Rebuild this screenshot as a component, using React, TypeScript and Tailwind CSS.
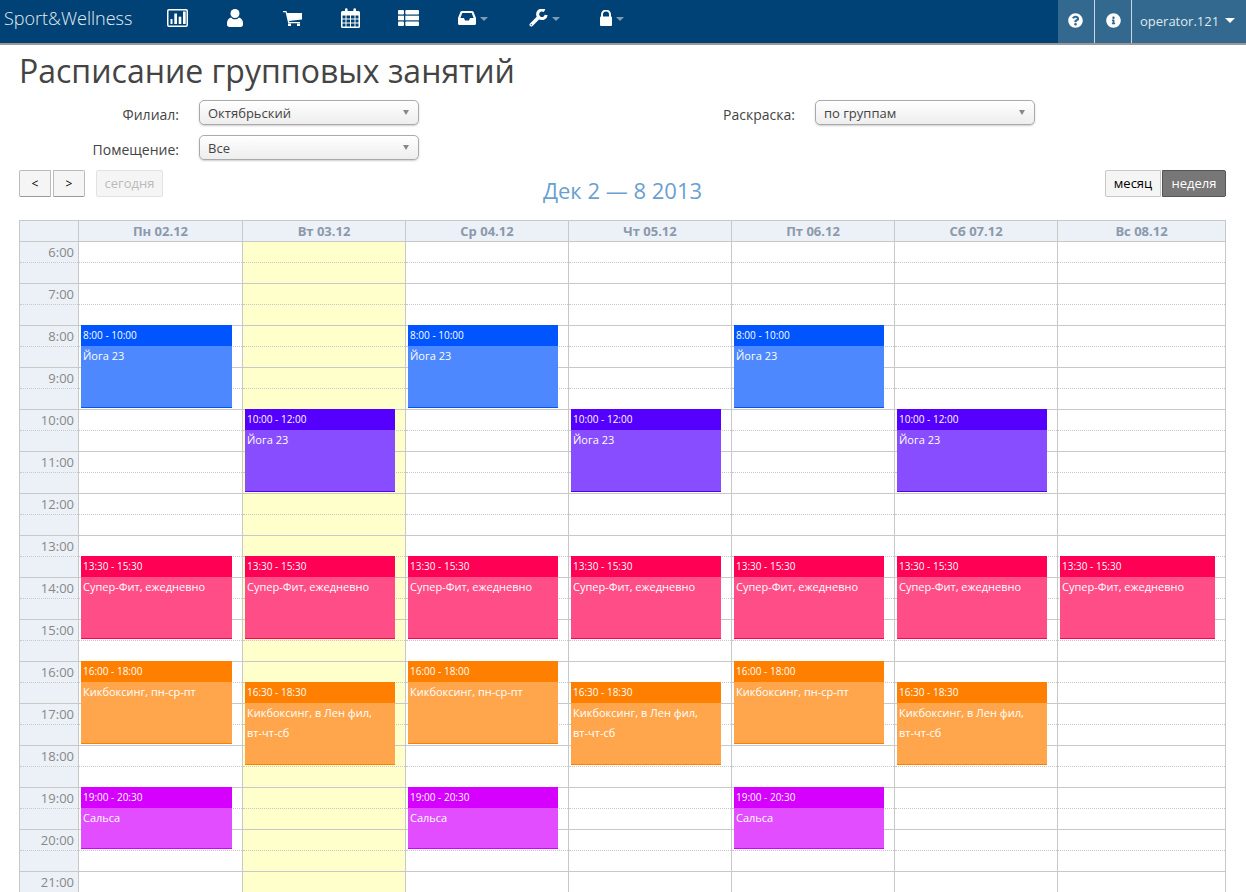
import { FaInfoCircle, FaQuestionCircle } from 'react-icons/fa'

type CalEvent = { day: number; start: number; end: number; time: string; title: string[]; kind: keyof typeof palette }

const palette = {
  blue: { head: 'bg-[#0055ff]', body: 'bg-[#4d88ff]', edge: 'border-[#0055ff]' },
  violet: { head: 'bg-[#5500ff]', body: 'bg-[#884dff]', edge: 'border-[#5500ff]' },
  pink: { head: 'bg-[#ff0055]', body: 'bg-[#ff4d88]', edge: 'border-[#ff0055]' },
  orange: { head: 'bg-[#ff8000]', body: 'bg-[#ffa64d]', edge: 'border-[#ff8000]' },
  magenta: { head: 'bg-[#d500ff]', body: 'bg-[#e24dff]', edge: 'border-[#d500ff]' },
}

const days = ['Пн 02.12', 'Вт 03.12', 'Ср 04.12', 'Чт 05.12', 'Пт 06.12', 'Сб 07.12', 'Вс 08.12']
const hours = Array.from({ length: 16 }, (_, i) => `${i + 6}:00`)

// monday is a pixel wider, sunday takes what is left
const colWidth = (i: number) => (i === 0 ? 'w-[164px]' : i === 6 ? 'w-[169px] border-r' : 'w-[163px]')
const eventWidth = (i: number) => (i === 0 ? 'w-[151px]' : i === 6 ? 'w-[155px]' : 'w-[150px]')

const yoga = ['Йога 23']
const fit = ['Супер-Фит, ежедневно']
const kick1 = ['Кикбоксинг, пн-ср-пт']
const kick2 = ['Кикбоксинг, в Лен фил,', 'вт-чт-сб']

const events: CalEvent[] = [
  ...[0, 2, 4].map((day) => ({ day, start: 8, end: 10, time: '8:00 - 10:00', title: yoga, kind: 'blue' as const })),
  ...[1, 3, 5].map((day) => ({ day, start: 10, end: 12, time: '10:00 - 12:00', title: yoga, kind: 'violet' as const })),
  ...[0, 1, 2, 3, 4, 5, 6].map((day) => ({ day, start: 13.5, end: 15.5, time: '13:30 - 15:30', title: fit, kind: 'pink' as const })),
  ...[0, 2, 4].map((day) => ({ day, start: 16, end: 18, time: '16:00 - 18:00', title: kick1, kind: 'orange' as const })),
  ...[1, 3, 5].map((day) => ({ day, start: 16.5, end: 18.5, time: '16:30 - 18:30', title: kick2, kind: 'orange' as const })),
  ...[0, 2, 4].map((day) => ({ day, start: 19, end: 20.5, time: '19:00 - 20:30', title: ['Сальса'], kind: 'magenta' as const })),
]

function ChartBox() {
  return (
    <svg width="21" height="18" viewBox="0 0 21 18" fill="white">
      <path fillRule="evenodd" d="M2 0h17a2 2 0 0 1 2 2v14a2 2 0 0 1-2 2H2a2 2 0 0 1-2-2V2a2 2 0 0 1 2-2zm0 1.500a.5.5 0 0 0-.5.5v14a.5.5 0 0 0 .5.5h17a.5.5 0 0 0 .5-.5V2a.5.5 0 0 0-.5-.5z" />
      <rect x="3.500" y="10" width="2" height="5" />
      <rect x="7.300" y="4.500" width="2.700" height="10.500" />
      <rect x="11.700" y="7.700" width="2.600" height="7.300" />
      <rect x="16" y="2.500" width="2.700" height="12.500" />
    </svg>
  )
}

function UserIcon() {
  return (
    <svg width="16" height="18" viewBox="0 0 16 18" fill="white">
      <circle cx="8" cy="4.500" r="4.500" />
      <path d="M4 8.500C5 9.800 6.400 10.300 8 10.300s3-.5 4-1.800c2.400.6 4 2.600 4 5.500v1.500c0 1.500-1 2.500-2.500 2.500h-11C1 18 0 17 0 15.500V14c0-2.900 1.600-4.900 4-5.500z" />
    </svg>
  )
}

function CartIcon() {
  return (
    <svg width="19" height="15" viewBox="0 0 19 15" fill="white">
      <path d="M0 0h3.500l.5 2H19v6.500L6 10l.3 1H17v1.200H5.200L2.600 1.200H0z" />
      <rect x="5" y="12.500" width="3" height="2.500" />
      <rect x="14" y="12.500" width="3" height="2.500" />
    </svg>
  )
}

function CalendarIcon() {
  return (
    <svg width="19" height="20" viewBox="0 0 19 20" fill="white">
      <path fillRule="evenodd" d="M1.500 3H4V1.500a1.300 1.300 0 0 1 2.600 0V3h5.800V1.500a1.300 1.300 0 0 1 2.600 0V3h2.500A1.500 1.500 0 0 1 19 4.500v14a1.500 1.500 0 0 1-1.500 1.500h-16A1.500 1.500 0 0 1 0 18.500v-14A1.500 1.500 0 0 1 1.500 3zM1.500 7.500v3h3v-3zm4 0v3h3.500v-3zm4.500 0v3h3.500v-3zm4.500 0v3h3v-3zM1.500 11.500v3h3v-3zm4 0v3h3.500v-3zm4.500 0v3h3.500v-3zm4.500 0v3h3v-3zM1.500 15.500v3h3v-3zm4 0v3h3.500v-3zm4.500 0v3h3.500v-3zm4.500 0v3h3v-3z" />
    </svg>
  )
}

function ListIcon() {
  return (
    <svg width="21" height="16" viewBox="0 0 21 16" fill="white">
      <rect width="6" height="4.500" rx="1" />
      <rect x="7.300" width="13.700" height="4.500" rx="1" />
      <rect y="5.700" width="6" height="4.600" />
      <rect x="7.300" y="5.700" width="13.700" height="4.600" />
      <rect y="11.500" width="6" height="4.500" rx="1" />
      <rect x="7.300" y="11.500" width="13.700" height="4.500" rx="1" />
    </svg>
  )
}

function InboxIcon() {
  return (
    <svg width="18" height="14" viewBox="0 0 18 14" fill="white">
      <path fillRule="evenodd" d="M4 0h10c.8 0 1.300.4 1.600 1L18 7v5.500c0 .9-.6 1.500-1.500 1.500h-15C.6 14 0 13.400 0 12.500V7l2.400-6C2.700.4 3.200 0 4 0zm.3 2L2.400 7H6l1 2.500h4L12 7h3.600l-1.900-5z" />
    </svg>
  )
}

function WrenchIcon() {
  return (
    <svg width="19" height="18" viewBox="0 0 19 18" fill="none" stroke="white">
      <path d="M2.300 15.700L9.500 8.500" strokeWidth="3.600" strokeLinecap="round" />
      <path d="M15.500 1.800A4.300 4.300 0 1 0 17.200 6" strokeWidth="3" />
      <circle cx="2.300" cy="15.700" r=".6" fill="#004275" stroke="none" />
    </svg>
  )
}

function LockIcon() {
  return (
    <svg width="12" height="16" viewBox="0 0 12 16" fill="white">
      <path d="M2 7V4.500a4 4 0 0 1 8 0V7" fill="none" stroke="white" strokeWidth="2" />
      <rect y="6.500" width="12" height="9.500" rx="1" />
    </svg>
  )
}

function NavCaret() {
  return <span className="ml-[4px] mt-[1px] h-0 w-0 border-x-[4px] border-t-[4px] border-x-transparent border-t-[#7f9cb5]" />
}

function Select({ label, value, labelWidth }: { label: string; value: string; labelWidth: string }) {
  return (
    <div className="flex items-center">
      <label className={`${labelWidth} pr-[20px] pt-[5px] text-right text-[14px] leading-[20px] text-[#444]`}>{label}</label>
      <div className="flex h-[25px] w-[220px] items-center justify-between rounded-[5px] border border-[#aaa] bg-gradient-to-b from-white via-[#f6f6f6] to-[#eee] pl-[8px] pr-[9px] pt-[2px] text-[13px] text-[#444] shadow-[0_1px_2px_rgba(0,0,0,0.2)]">
        <span>{value}</span>
        <span className="mb-[2px] h-0 w-0 border-x-[3.5px] border-t-[5px] border-x-transparent border-t-[#888]" />
      </div>
    </div>
  )
}

function DayColumn({ index }: { index: number }) {
  const dayEvents = events.filter((e) => e.day === index)
  return (
    <div className={`relative border-l border-[#c8c8c8] ${colWidth(index)} ${index === 1 ? 'bg-[#ffffcc]' : 'bg-white'}`}>
      {hours.map((h) => (
        <div key={h} className="h-[42px] border-b border-[#c8c8c8]">
          <div className="h-[21px] border-b border-dotted border-[#c8c8c8]" />
        </div>
      ))}
      {dayEvents.map((e) => {
        const c = palette[e.kind]
        return (
          <div
            key={e.time}
            className={`absolute left-[2px] overflow-hidden border-b text-[10px] leading-[21px] text-white ${eventWidth(index)} ${c.body} ${c.edge}`}
            style={{ top: (e.start - 6) * 42 - 1, height: (e.end - e.start) * 42 - 1 }}
          >
            <div className={`h-[21px] pl-[2px] ${c.head}`}>{e.time}</div>
            {e.title.map((line) => (
              <div key={line} className="pl-[2px] text-[11px] leading-[20px]">{line}</div>
            ))}
          </div>
        )
      })}
    </div>
  )
}

export default function App() {
  return (
    <div className="h-[892px] w-[1246px] overflow-hidden bg-white font-['Open_Sans',sans-serif]">
      <nav className="flex h-[45px] items-stretch border-b-2 border-[#999] bg-[#004275] text-white">
        <a className="mt-[6px] w-[167px] pl-[4px] text-[18px] font-light leading-[24px] text-[#e6edf2]">Sport&amp;Wellness</a>
        <div className="flex items-center pb-[7px]">
          <span className="flex w-[60px]"><ChartBox /></span>
          <span className="flex w-[56px]"><UserIcon /></span>
          <span className="flex w-[58px]"><CartIcon /></span>
          <span className="flex w-[57px]"><CalendarIcon /></span>
          <span className="flex w-[60px]"><ListIcon /></span>
          <span className="flex w-[71px] items-center"><InboxIcon /><NavCaret /></span>
          <span className="flex w-[71px] items-center"><WrenchIcon /><NavCaret /></span>
          <span className="flex items-center"><LockIcon /><NavCaret /></span>
        </div>
        <div className="ml-auto flex bg-[#33688f]">
          <span className="flex w-[37px] items-center justify-center border-r border-[#c8d6e0] pb-[2px] pr-[1px]"><FaQuestionCircle size={15} /></span>
          <span className="flex w-[37px] items-center justify-center border-r border-[#c8d6e0] pb-[2px]"><FaInfoCircle size={15} /></span>
          <span className="flex w-[114px] items-center pl-[8px] text-[13px] text-[#dfe8ee]">
            operator.121
            <span className="mb-[3px] ml-[6px] h-0 w-0 border-x-[5px] border-t-[5px] border-x-transparent border-t-white" />
          </span>
        </div>
      </nav>

      <div className="pl-[19px] pr-[20px]">
        <h1 className="mt-[4px] text-[32px] font-normal leading-[44px] text-[#444]">Расписание групповых занятий</h1>

        <div className="mt-[7px] flex">
          <div className="flex w-[703px] flex-col gap-[10px]">
            <Select label="Филиал:" value="Октябрьский" labelWidth="w-[180px]" />
            <Select label="Помещение:" value="Все" labelWidth="w-[180px]" />
          </div>
          <div>
            <Select label="Раскраска:" value="по группам" labelWidth="w-[93px]" />
          </div>
        </div>

        <div className="relative mt-[10px] flex h-[50px] items-start text-[13px]">
          <button className="h-[27px] w-[32px] rounded-l-[2px] border border-[#bbb] border-b-[#999] bg-[#f5f5f5] text-[12px] text-black">&lt;</button>
          <button className="ml-[2px] h-[27px] w-[32px] rounded-r-[2px] border border-[#bbb] border-b-[#999] bg-[#f5f5f5] text-[12px] text-black">&gt;</button>
          <button className="ml-[11px] h-[27px] w-[67px] rounded-[2px] border border-[#e2e2e2] bg-[#f5f5f5] text-[#bbb]">сегодня</button>
          <div className="ml-auto flex">
            <button className="h-[27px] w-[56px] rounded-l-[2px] border border-[#c8c8c8] bg-[#f5f5f5] text-black">месяц</button>
            <button className="ml-[1px] h-[27px] w-[64px] rounded-r-[2px] border border-[#555] bg-[#777] text-white">неделя</button>
          </div>
          <div className="absolute left-0 right-0 top-[5px] text-center text-[22px] leading-[30px] text-[#6b9fcf]">Дек 2 — 8 2013</div>
        </div>

        <div className="w-[1207px] border-l border-t border-[#c8c8c8]">
          <div className="flex h-[21px] border-b border-[#c8c8c8] bg-[#ecf0f7] text-[13px] font-bold leading-[20px] text-[#8b99ab]">
            <div className="w-[58px]" />
            {days.map((d, i) => (
              <div key={d} className={`border-l border-[#c8c8c8] text-center ${colWidth(i)}`}>{d}</div>
            ))}
          </div>
          <div className="flex">
            <div className="w-[58px] bg-[#ecf0f7] text-right text-[13px] text-[#888]">
              {hours.map((h) => (
                <div key={h} className="h-[42px] border-b border-[#c8c8c8]">
                  <div className="h-[21px] border-b border-dotted border-[#c8c8c8] pr-[4px] leading-[20px]">{h}</div>
                </div>
              ))}
            </div>
            {days.map((d, i) => (
              <DayColumn key={d} index={i} />
            ))}
          </div>
        </div>
      </div>
    </div>
  )
}
